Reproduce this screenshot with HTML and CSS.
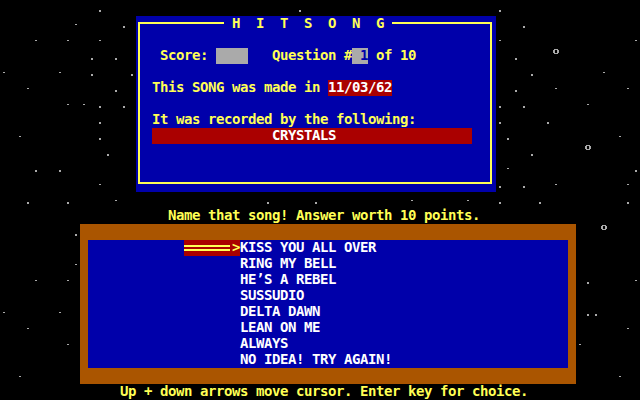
FILE: index.html
```html
<!DOCTYPE html>
<html lang="en">
<head>
<meta charset="utf-8">
<title>HITSONG</title>
<link rel="stylesheet" href="styles.css">
</head>
<body>
<div class="screen">
  <svg class="stars" width="640" height="400" viewBox="0 0 640 400" aria-hidden="true">
    <defs>
      <path id="ring" d="M2 1h4v1h-4z M1 2h2v3h-2z M5 2h2v3h-2z M2 5h4v1h-4z"/>
    </defs>
    <path class="dot" d="M99 10h2v2h-2z M123 26h2v2h-2z M91 58h2v2h-2z M115 58h2v2h-2z M91 74h2v2h-2z M131 74h2v2h-2z M115 90h2v2h-2z M99 106h2v2h-2z M123 106h2v2h-2z M99 122h2v2h-2z M99 138h2v2h-2z M107 154h2v2h-2z M35 170h2v2h-2z M59 170h2v2h-2z M299 10h2v2h-2z M499 10h2v2h-2z M523 26h2v2h-2z M515 58h2v2h-2z M531 74h2v2h-2z M515 90h2v2h-2z M499 106h2v2h-2z M523 106h2v2h-2z M499 122h2v2h-2z M547 122h2v2h-2z M507 138h2v2h-2z M531 154h2v2h-2z M635 170h2v2h-2z M499 186h2v2h-2z M523 186h2v2h-2z M27 202h2v2h-2z M67 202h2v2h-2z M267 202h2v2h-2z M315 202h2v2h-2z M499 202h2v2h-2z M539 202h2v2h-2z M627 202h2v2h-2z M75 234h2v2h-2z M587 282h2v2h-2z M587 314h2v2h-2z M595 314h2v2h-2z"/>
    <path class="dot" d="M75 24h2v1h-2z M35 40h2v1h-2z M67 40h2v1h-2z M99 40h2v1h-2z M3 72h2v1h-2z M59 72h2v1h-2z M27 88h2v1h-2z M67 104h2v1h-2z M83 104h2v1h-2z M19 136h2v1h-2z M99 184h2v1h-2z M499 40h2v1h-2z M635 40h2v1h-2z M603 72h2v1h-2z M555 88h2v1h-2z M627 88h2v1h-2z M587 104h2v1h-2z M619 136h2v1h-2z M507 168h2v1h-2z M555 184h2v1h-2z M627 184h2v1h-2z M115 200h2v1h-2z M411 200h2v1h-2z M467 200h2v1h-2z M75 264h2v1h-2z M35 280h2v1h-2z M67 280h2v1h-2z M3 312h2v1h-2z M59 312h2v1h-2z M27 328h2v1h-2z M67 344h2v1h-2z M19 376h2v1h-2z M635 280h2v1h-2z M627 328h2v1h-2z M579 344h2v1h-2z M619 376h2v1h-2z"/>
    <use class="dot" href="#ring" x="552" y="48"/>
    <use class="dot" href="#ring" x="584" y="144"/>
    <use class="dot" href="#ring" x="600" y="224"/>
  </svg>

  <section class="hitsong">
    <div class="frame"></div>
    <h1 class="title"> H  I  T  S  O  N  G </h1>
    <p class="score-line">Score: <span class="field">    </span>   Question #<span class="field"> 1</span> of 10</p>
    <p class="made-line">This SONG was made in <span class="date">11/03/62</span></p>
    <p class="rec-line">It was recorded by the following:</p>
    <p class="artist">CRYSTALS</p>
  </section>

  <p class="prompt">Name that song! Answer worth 10 points.</p>

  <section class="chooser">
    <ul class="choices">
      <li class="choice"><span class="cursor selected"><span class="bar"></span>&gt;</span>KISS YOU ALL OVER</li>
      <li class="choice"><span class="cursor">       </span>RING MY BELL</li>
      <li class="choice"><span class="cursor">       </span>HE’S A REBEL</li>
      <li class="choice"><span class="cursor">       </span>SUSSUDIO</li>
      <li class="choice"><span class="cursor">       </span>DELTA DAWN</li>
      <li class="choice"><span class="cursor">       </span>LEAN ON ME</li>
      <li class="choice"><span class="cursor">       </span>ALWAYS</li>
      <li class="choice"><span class="cursor">       </span>NO IDEA! TRY AGAIN!</li>
    </ul>
  </section>

  <p class="help">Up + down arrows move cursor. Enter key for choice.</p>
</div>
</body>
</html>
```

FILE: styles.css
```css
html, body {
  margin: 0;
  padding: 0;
  background: #000;
}

.screen {
  position: relative;
  z-index: 0;
  width: 640px;
  height: 400px;
  overflow: hidden;
  display: grid;
  grid-template-columns: repeat(80, 8px);
  grid-template-rows: repeat(25, 16px);
  background: #000;
  color: #ffff55;
  font-family: "DejaVu Sans Mono", "Liberation Mono", monospace;
  font-weight: bold;
  font-size: 14px;
  letter-spacing: -0.4287px;
  line-height: 14px;
}

.screen p,
.screen h1,
.screen ul,
.screen li {
  margin: 0;
  padding: 0;
  font: inherit;
}

.screen p,
.screen h1,
.screen li {
  white-space: pre;
}

.stars {
  position: absolute;
  left: 0;
  top: 0;
  z-index: -1;
}

.dot {
  fill: #aaaaaa;
}

/* ---- top HITSONG panel ---- */
.hitsong {
  grid-column: 18 / 63;
  grid-row: 2 / 13;
  display: grid;
  grid-template-columns: repeat(45, 8px);
  grid-template-rows: repeat(11, 16px);
  background: #0000aa;
}

.frame {
  grid-column: 1 / -1;
  grid-row: 1 / -1;
  margin: 6px 4px 8px 2px;
  border: 2px solid #ffff55;
}

.title {
  grid-column: 12 / 33;
  grid-row: 1 / 2;
  background: #0000aa;
  color: #ffff55;
}

.score-line {
  grid-column: 4 / -1;
  grid-row: 3 / 4;
}

.field {
  display: inline-block;
  height: 16px;
  vertical-align: top;
  background: #aaaaaa;
  color: #0000aa;
}

.made-line {
  grid-column: 3 / -1;
  grid-row: 5 / 6;
}

.date {
  display: inline-block;
  height: 16px;
  vertical-align: top;
  background: #aa0000;
  color: #ffffff;
}

.rec-line {
  grid-column: 3 / -1;
  grid-row: 7 / 8;
}

.screen .artist {
  grid-column: 3 / 43;
  grid-row: 8 / 9;
  background: #aa0000;
  color: #ffffff;
  padding-left: 120px;
}

/* ---- prompt ---- */
.prompt {
  grid-column: 22 / -1;
  grid-row: 14 / 15;
}

/* ---- chooser ---- */
.chooser {
  grid-column: 11 / 73;
  grid-row: 15 / 25;
  background: #aa5500;
  padding: 16px 8px;
}

.screen .choices {
  list-style: none;
  background: #0000aa;
  height: 128px;
  padding-left: 96px;
}

.choice {
  display: flex;
  color: #ffffff;
  height: 16px;
}

.cursor {
  display: flex;
  width: 56px;
  height: 16px;
  flex: none;
  color: #ffff55;
}

.cursor.selected {
  background: #aa0000;
}

.bar {
  width: 48px;
  height: 16px;
  background:
    linear-gradient(#ffff55, #ffff55) 0 5px / 46px 2px no-repeat,
    linear-gradient(#ffff55, #ffff55) 0 9px / 46px 2px no-repeat;
}

/* ---- help ---- */
.help {
  grid-column: 16 / -1;
  grid-row: 25 / 26;
}
```
